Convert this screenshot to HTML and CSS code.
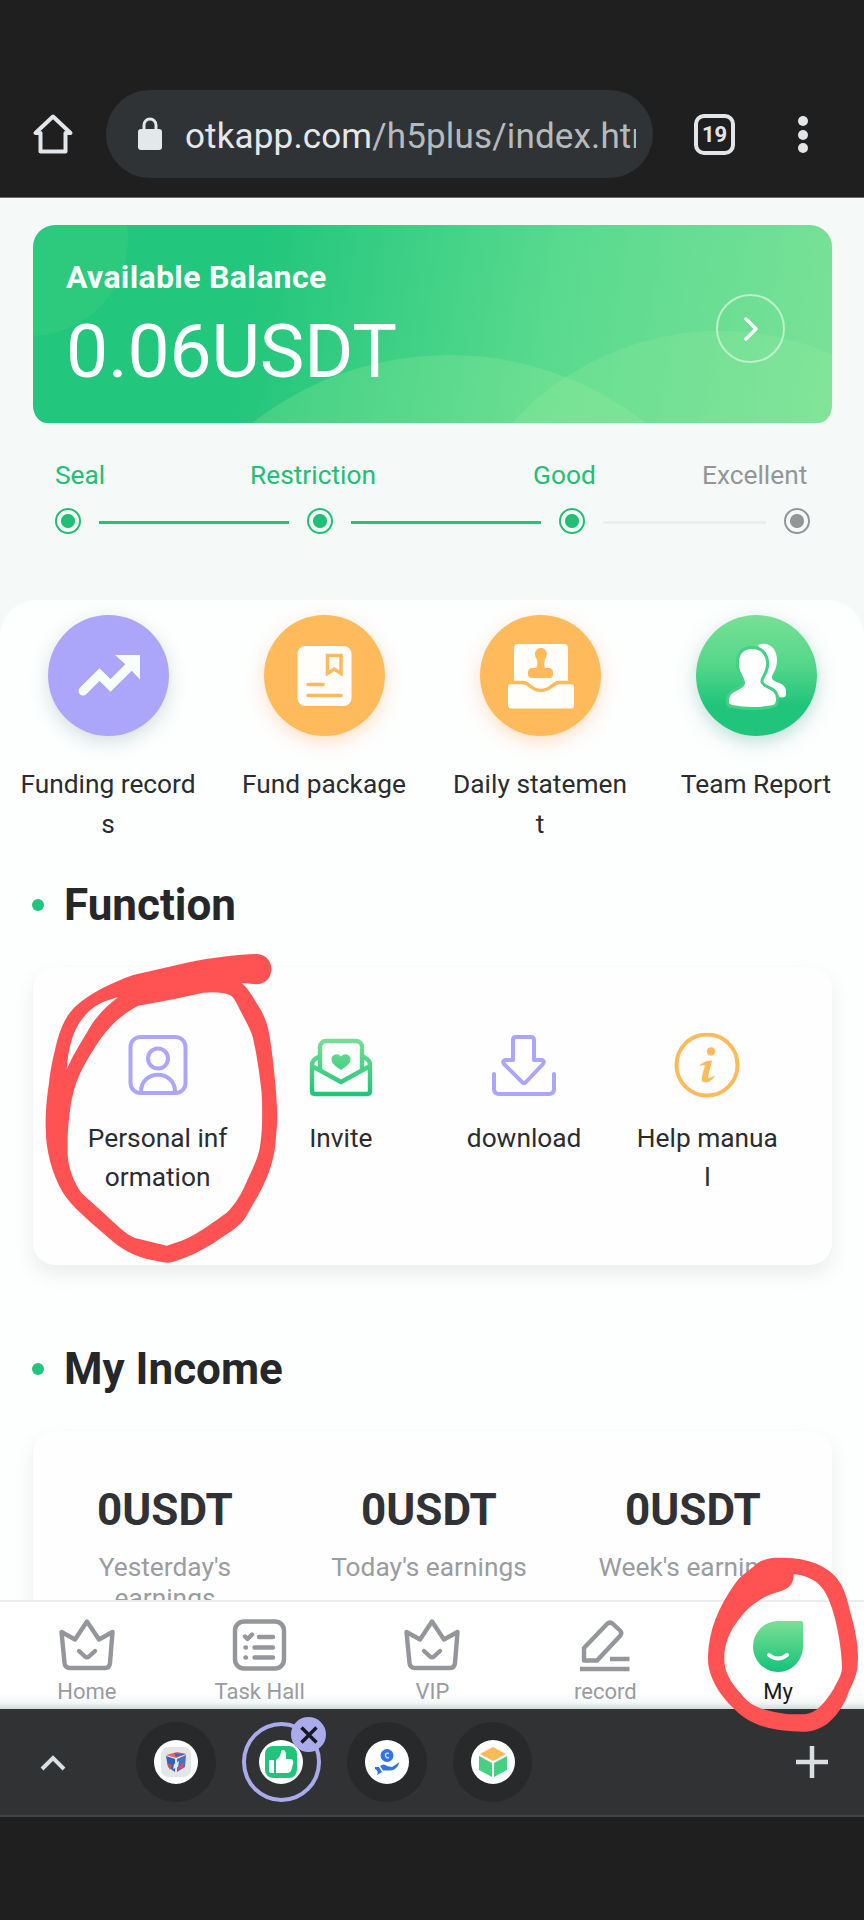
FILE: index.html
```html
<!DOCTYPE html>
<html lang="en">
<head>
<meta charset="utf-8">
<title>My account</title>
<link rel="stylesheet" href="styles.css">
</head>
<body>
<div class="phone">
  <header class="browser-bar">
    <svg class="home-icon" width="42" height="42" viewBox="0 0 42 42"><path d="M21 3.500 3.500 20H8.500V38.500H33.500V20H38.500Z" fill="none" stroke="#e3e6e8" stroke-width="4" stroke-linejoin="round"/></svg>
    <div class="url-pill">
      <svg class="lock" width="26" height="34" viewBox="0 0 26 34"><rect x="1" y="12" width="24" height="21" rx="3" fill="#e3e8ea"/><path d="M7 13V8a6 6 0 0 1 12 0v5" fill="none" stroke="#e3e8ea" stroke-width="3"/></svg>
      <div class="url">otkapp.com<span class="path">/h5plus/index.html</span></div>
    </div>
    <div class="tab-count">19</div>
    <div class="kebab"><i></i><i></i><i></i></div>
  </header>

  <main class="page">
    <section class="balance-wrap">
      <div class="balance">
        <svg class="bubbles" width="799" height="198" viewBox="33 225 799 198"><g fill="#a4f0a0"><circle cx="30" cy="238" r="98" opacity=".09"/><circle cx="449" cy="674" r="319" opacity=".24"/><circle cx="720" cy="612" r="281" opacity=".2"/></g></svg>
        <div class="balance-text">
          <div class="balance-label">Available Balance</div>
          <div class="balance-value">0.06USDT</div>
        </div>
        <div class="go"><svg width="14" height="24" viewBox="0 0 14 24"><path d="M2 2 12 12 2 22" fill="none" stroke="#fff" stroke-width="3.400" stroke-linecap="round" stroke-linejoin="round"/></svg></div>
      </div>
    </section>

    <section class="steps">
      <div class="step wide"><span class="name">Seal</span><div class="track"><b class="dot"></b><i class="line"></i></div></div>
      <div class="step wide"><span class="name mid">Restriction</span><div class="track"><b class="dot"></b><i class="line"></i></div></div>
      <div class="step third"><span class="name good">Good</span><div class="track"><b class="dot"></b><i class="line pale"></i></div></div>
      <div class="step last"><span class="name excellent">Excellent</span><div class="track"><b class="dot"></b></div></div>
    </section>

    <div class="sheet">
      <nav class="shortcuts">
        <div class="shortcut"><div class="disc violet">
          <svg width="121" height="121" viewBox="0 0 121 121"><path d="M35 76 51.500 59.500 62.500 70.500 83 50" fill="none" stroke="#f8fffb" stroke-width="9" stroke-linecap="round" stroke-linejoin="miter"/><path d="M67 40H92V64.500L85 57 76 48Z" fill="#f8fffb"/></svg>
        </div><p>Funding record<br>s</p></div>
        <div class="shortcut"><div class="disc orange">
          <svg width="121" height="121" viewBox="0 0 121 121"><rect x="33.500" y="31" width="54" height="60" rx="8" fill="#fffefb"/><path d="M63.500 40.500H77V58.500L70.300 54 63.500 58.500Z" fill="none" stroke="#ffbb5b" stroke-width="3.500"/><path d="M44 69.500H59M44 80.500H77" stroke="#ffbb5b" stroke-width="3.500" stroke-linecap="round"/></svg>
        </div><p>Fund package</p></div>
        <div class="shortcut"><div class="disc orange">
          <svg width="121" height="121" viewBox="0 0 121 121"><rect x="34" y="29" width="54" height="50" rx="4" fill="#fffefb"/><path d="M28 72a3 3 0 0 1 3-3H42C47 69 49 76.500 61 76.500S75 69 80 69H91a3 3 0 0 1 3 3V90a3.500 3.500 0 0 1-3.500 3.500H31.500A3.500 3.500 0 0 1 28 90Z" fill="#fffefb"/><path d="M29 67.500H43C50 67.500 50 75.500 61 75.500S72 67.500 79 67.500H93" fill="none" stroke="#ffbb5b" stroke-width="3.500"/><path d="M55 40a6 6 0 1 1 11 2C64 45 64 50 65 53H70a4 4 0 0 1 3 3.500V59a4 4 0 0 1-4 4H52a4 4 0 0 1-4-4V56.500A4 4 0 0 1 51 53H56C58 50 58 45 55.500 42Z" fill="#ffbb5b"/></svg>
        </div><p>Daily statemen<br>t</p></div>
        <div class="shortcut"><div class="disc green">
          <svg width="121" height="121" viewBox="0 0 121 121"><path d="M62 30C72 26 81 33 81 45 81 56 75 60 76 63 77 68 90 67 90 76V79C90 83 86 83 83 82L66 70 70 50Z" fill="#fff"/><path d="M56 32.500C67 32.500 72.500 41 71.500 51 70.500 60 65 63 66 67 67 73 81.500 71 81.500 84 81.500 90 79 91.500 75 92 62 94 48 94 36 91.500 32 91 31 88 31.500 84 33 73 47 75 47.500 68 48 63 41 58 41.500 49 41 39 46 32.500 56 32.500Z" fill="#fff" stroke="#46cf86" stroke-width="3"/></svg>
        </div><p>Team Report</p></div>
      </nav>

      <h2 class="heading">Function</h2>
      <section class="card functions">
        <div class="fn"><div class="fn-icon"><svg width="66" height="66" viewBox="0 0 66 66" fill="none" stroke="#aba6f9" stroke-width="4"><rect x="5.500" y="4" width="55" height="56" rx="10"/><circle cx="33" cy="25.500" r="10"/><path d="M16 59C16 36 50 36 50 59"/></svg></div><p>Personal inf<br>ormation</p></div>
        <div class="fn"><div class="fn-icon"><svg width="66" height="66" viewBox="0 0 66 66"><defs><linearGradient id="env" x1="0" y1="6" x2="0" y2="62" gradientUnits="userSpaceOnUse"><stop stop-color="#76df95"/><stop offset="1" stop-color="#22c47b"/></linearGradient></defs><g fill="none" stroke="url(#env)" stroke-width="4.400" stroke-linejoin="round"><path d="M12 36V14A6 6 0 0 1 18 8H48A6 6 0 0 1 54 14V36"/><path d="M11.500 23.500 7 26Q4 28 4 32V58Q4 61 7 61H59Q62 61 62 58V32Q62 28 59 26L54.500 23.500M4 33 33 49 62 33"/></g><path d="M33 37C29 34 23 31 23.500 25.500 24 21 30 19.500 33 23.500 36 19.500 42 21 42.500 25.500 43 31 37 34 33 37Z" fill="url(#env)"/></svg></div><p>Invite</p></div>
        <div class="fn"><div class="fn-icon"><svg width="66" height="66" viewBox="0 0 66 66" fill="none" stroke="#aba6f9" stroke-width="4" stroke-linejoin="round" stroke-linecap="round"><path d="M22 27V7Q22 4 25 4H40Q43 4 43 7V27H51Q54 28 52 31L35 49Q33 51 31 49L13 31Q11 28 14 27Z"/><path d="M3 41V56Q3 61 8 61H58Q63 61 63 56V41"/></svg></div><p>download</p></div>
        <div class="fn"><div class="fn-icon"><svg width="66" height="66" viewBox="0 0 66 66"><circle cx="33" cy="32" r="30.500" fill="none" stroke="#ffbb5b" stroke-width="4"/><circle cx="37" cy="18.500" r="4.200" fill="#ffbb5b"/><path d="M24 33C28 31 30 27.500 38 27.500L34 44C34 46 36 44 41 43 38 48 33 50.500 29 49 26 48 29 40 31 32.500 28 32 26 32.500 24 33Z" fill="#ffbb5b"/></svg></div><p>Help manua<br>l</p></div>
      </section>

      <h2 class="heading income-heading">My Income</h2>
      <section class="card income">
        <div class="earn"><strong>0USDT</strong><span>Yesterday's<br>earnings</span></div>
        <div class="earn"><strong>0USDT</strong><span>Today's earnings</span></div>
        <div class="earn"><strong>0USDT</strong><span>Week's earnings</span></div>
      </section>
    </div>
  </main>

  <nav class="tabs">
    <div class="tab"><svg width="56" height="56" viewBox="0 0 56 56" fill="none" stroke="#95969b" stroke-width="4.400" stroke-linejoin="round" stroke-linecap="round"><path d="M2.500 15 16 22.500 28 4.500 40 22.500 53.500 15 51 46Q50.500 51 46 51H11Q6 51 5.500 46Z"/><path d="M20 34 26 39.500Q28 41 30 39.500L36 34"/></svg><span>Home</span></div>
    <div class="tab"><svg width="56" height="56" viewBox="0 0 56 56" fill="none" stroke="#95969b" stroke-width="4.400" stroke-linejoin="round" stroke-linecap="round"><rect x="3" y="4.500" width="49" height="47" rx="9"/><path d="M13 19.500 15.500 22 20 17.500M27 20H41M22.500 30.500H41M22.500 40.500H41M13.500 30.500h.5M13.500 40.500h.5"/></svg><span>Task Hall</span></div>
    <div class="tab"><svg width="56" height="56" viewBox="0 0 56 56" fill="none" stroke="#95969b" stroke-width="4.400" stroke-linejoin="round" stroke-linecap="round"><path d="M2.500 15 16 22.500 28 4.500 40 22.500 53.500 15 51 46Q50.500 51 46 51H11Q6 51 5.500 46Z"/><path d="M20 34 26 39.500Q28 41 30 39.500L36 34"/></svg><span>VIP</span></div>
    <div class="tab"><svg width="56" height="56" viewBox="0 0 56 56" fill="none" stroke="#95969b" stroke-width="4.400" stroke-linejoin="round"><path d="M7 43.500V31L29.500 7.500Q32.500 4 36 7L43 13.500Q45.500 16 43 19L20 43.500Z"/><path d="M33 42H52.500M3 52H52.500"/></svg><span>record</span></div>
    <div class="tab active"><svg width="56" height="56" viewBox="0 0 56 56"><defs><linearGradient id="face" x1="0" y1="0" x2="0" y2="1"><stop stop-color="#7be095"/><stop offset="1" stop-color="#14c279"/></linearGradient></defs><path d="M28 4H51Q53 4 53 6V29A25 25.500 0 1 1 28 4Z" fill="url(#face)"/><path d="M19 38Q28 45 37 38" fill="none" stroke="#fff" stroke-width="4" stroke-linecap="round"/></svg><span>My</span></div>
  </nav>

  <footer class="dock">
    <svg class="up" width="26" height="17" viewBox="0 0 26 17"><path d="M2 15 13 4 24 15" fill="none" stroke="#dcdfe1" stroke-width="4"/></svg>
    <div class="sites">
      <div class="site"><div class="fav"><svg width="44" height="44" viewBox="0 0 44 44"><rect x="7" y="7" width="30" height="30" rx="7" fill="#e2e7e5"/><path d="M12 15 23 12 32 14 22 18Z" fill="#ef6464"/><path d="M20 13 32 14 22 17Z" fill="#3e69c2"/><path d="M12 16 21 19V32L14 27Z" fill="#315fc2"/><path d="M23 19 32 15 31 27 23 32Z" fill="#4472c5"/><path d="M13 23 18 25 16 30ZM25 26 30 22 29 28 24 30Z" fill="#e34854"/><path d="M20 24 25 21 24 27 19 29Z" fill="#dce7ee"/></svg></div></div>
      <div class="site current"><div class="fav"><svg width="44" height="44" viewBox="0 0 44 44"><rect x="6" y="6" width="32" height="32" rx="8" fill="#22c47b"/><path d="M10 20H15V33H12Q10 33 10 30ZM17 20Q22 17 22 11 26 8 27 14V19H32Q35 20 34 24L32 31Q31 33 28 33H17Z" fill="#fff"/></svg></div>
        <div class="close"><svg width="18" height="18" viewBox="0 0 18 18"><path d="M1.500 1.500 16.500 16.500M16.500 1.500 1.500 16.500" stroke="#151822" stroke-width="3.400"/></svg></div>
      </div>
      <div class="site"><div class="fav"><svg width="44" height="44" viewBox="0 0 44 44"><circle cx="22" cy="15.500" r="6.500" fill="#3274e0"/><path d="M24 13.500Q20 12.500 20.500 15.500T24 17.500" fill="none" stroke="#c3d9fb" stroke-width="1.500"/><path d="M10 27 14 27 17 32 12 35Q14 31 10 29ZM15 26Q19 23 22 26L27 27 34.500 22Q32 30 26 30.500H18Z" fill="#3274e0"/></svg></div></div>
      <div class="site"><div class="fav"><svg width="44" height="44" viewBox="0 0 44 44"><path d="M22 7 35 14 22 21 9 14Z" fill="#ffb957"/><path d="M8 16 21 23V37L8 30Z" fill="#46d083"/><path d="M23 23 36 16V30L23 37Z" fill="#46d083"/></svg></div></div>
    </div>
    <svg class="plus" width="32" height="32" viewBox="0 0 32 32"><path d="M16 0V32M0 16H32" stroke="#dcdfe1" stroke-width="4.500"/></svg>
  </footer>

  <svg class="markup" width="864" height="1920" viewBox="0 0 864 1920" fill="#ff5252" fill-rule="evenodd">
    <path transform="translate(0 860) scale(.33333)" d="M770 282C720 282 640 292 560 308L400 345C340 365 270 400 225 440 185 480 172 540 165 570 155 610 150 640 147 670 139 720 137 760 137 800 137 870 155 940 190 1000 215 1040 270 1085 310 1120 350 1156 380 1180 440 1197L490 1207Q505 1210 520 1205C560 1194 600 1175 640 1150 680 1122 720 1100 735 1075L775 1005C810 940 825 890 828 830 835 770 830 730 827 680 822 630 818 590 812 550 805 490 790 460 770 430Q745 385 725 369L768 373C828 373 830 285 770 282ZM415 437 520 418 610 398Q660 393 690 405C705 415 710 430 725 460Q750 505 758 530C770 580 780 650 785 700 788 760 787 820 780 860 773 900 755 930 740 965 725 1000 705 1035 680 1058 650 1080 590 1125 545 1142L500 1157 405 1134C375 1120 350 1095 320 1067L245 1000C220 965 203 920 203 880V830C205 780 212 730 217 710 230 650 260 600 280 570 310 520 350 470 415 437ZM354 412C300 425 270 445 248 475 220 510 205 560 200 630 215 590 245 545 265 510 290 465 325 435 354 412Z"/>
    <path transform="translate(432 1540) scale(.33333)" d="M1060 53C1140 55 1200 85 1225 130 1245 165 1250 200 1260 235 1275 290 1280 340 1277 370 1277 410 1255 440 1245 470 1220 525 1180 575 1115 575 1030 575 960 560 910 510 855 460 825 400 828 350 830 270 860 200 910 130 930 100 950 95 970 75 1000 50 1030 53 1060 53ZM1085 103C1165 110 1185 160 1200 205 1215 250 1230 330 1230 385 1228 410 1215 425 1205 447 1180 485 1155 523 1110 523H1070C1010 515 960 505 930 465 890 420 875 390 877 350 878 290 915 240 950 205 1000 160 1035 160 1055 150 1080 140 1085 122 1085 103Z"/>
  </svg>
</div>
</body>
</html>
```
FILE: styles.css
```css
* { box-sizing: border-box; }
body { margin: 0; background: #1f1f1f; font-family: Roboto, sans-serif; color: #2a2c2f; }
p, h2 { margin: 0; font-weight: 400; }
svg { display: block; flex: none; }

.phone { position: relative; width: 864px; height: 1920px; overflow: hidden; display: flex; flex-direction: column; background: #1f1f1f; }

/* browser chrome */
.browser-bar { flex: none; height: 198px; padding: 90px 53px 0 32px; display: flex; align-items: flex-start; border-bottom: 1px solid #6c6e6e; }
.home-icon { margin-top: 23px; }
.url-pill { width: 547px; height: 88px; margin-left: 32px; border-radius: 44px; background: #303335; display: flex; align-items: center; padding: 0 17px 0 31px; }
.lock { margin-top: -1px; }
.url { margin: 5px 0 0 22px; flex: 1; overflow: hidden; white-space: nowrap; font-size: 35px; line-height: 44px; letter-spacing: .15px; color: #e5e8ea; }
.path { color: #b6babd; }
.tab-count { width: 41px; height: 41px; margin: 24px 0 0 41px; border: 4px solid #e3e6e8; border-radius: 10px; color: #e3e6e8; font-size: 22px; line-height: 33px; font-weight: 700; text-align: center; }
.kebab { margin: 26px 0 0 63px; display: flex; flex-direction: column; gap: 3.500px; }
.kebab i { width: 10px; height: 10px; border-radius: 50%; background: #e3e6e8; }

/* page */
.page { flex: none; height: 1402px; overflow: hidden; background: #f5f9f8; }
.balance-wrap { padding: 27px 32px 0 33px; }
.balance { position: relative; height: 198px; overflow: hidden; border-radius: 22px 22px 14px 14px / 22px 22px 18px 18px; background: linear-gradient(100deg, #22c67c 28%, #5ada8f 65%, #78e197 98%); display: flex; justify-content: space-between; padding: 0 47px 0 33px; }
.bubbles { position: absolute; inset: 0; }
.balance-text { position: relative; color: #fff; padding-top: 33px; }
.balance-label { font-size: 32px; line-height: 38px; font-weight: 700; letter-spacing: .35px; }
.balance-value { margin-top: 11px; font-size: 75px; line-height: 88px; letter-spacing: -.2px; }
.go { position: relative; width: 69px; height: 69px; margin-top: 69px; border: 2px solid #bdf0cb; border-radius: 50%; display: flex; align-items: center; justify-content: center; }

.steps { height: 177px; padding: 36px 54px 0 55px; display: flex; }
.step { color: #22bf76; font-size: 26.300px; line-height: 32px; }
.wide { width: 252px; }
.third { width: 225px; }
.name { display: block; width: max-content; }
.mid { margin-left: -57px; }
.good { margin-left: -26px; }
.excellent { margin-left: -82px; }
.track { display: flex; align-items: center; margin-top: 17px; }
.dot { flex: none; width: 26px; height: 26px; border: 2px solid currentColor; border-radius: 50%; background: radial-gradient(circle, currentColor 6.500px, transparent 7.500px); }
.line { flex: 1; height: 3px; margin: 2px 18px 0 18px; background: #22c47b; }
.pale { background: #eceeee; }
.last { width: 26px; color: #939699; }

.sheet { background: #fdfefe; height: 1000px; border-radius: 36px 36px 0 0; }
.shortcuts { display: flex; height: 260px; padding-top: 15px; }
.shortcut { width: 216px; text-align: center; font-size: 26.300px; line-height: 40px; display: flex; flex-direction: column; align-items: center; gap: 28px; }
.shortcut p { white-space: nowrap; }
.disc { width: 121px; height: 121px; border-radius: 50%; flex: none; }
.violet { background: #aba6f9; box-shadow: 0 6px 18px #c3d0d2b0; }
.orange { background: #ffbb5b; box-shadow: 0 6px 18px #ffd4b0b0; }
.green { background: linear-gradient(#77e095, #56d78b 40%, #20c47a 75%); box-shadow: 0 6px 18px #a4d2c6b0; }

.heading { display: flex; align-items: center; height: 90px; padding-left: 32px; font-size: 44px; font-weight: 700; line-height: 52px; color: #252729; }
.heading::before { content: ""; width: 12px; height: 12px; border-radius: 50%; background: #22c47b; margin-right: 20px; }
.card { margin: 17px 32px 0 33px; border-radius: 22px; background: #fefefe; box-shadow: 0 9px 18px #dfe5e399; }
.functions { height: 298px; padding: 66px 33px 0; display: flex; }
.fn { width: 183.300px; display: flex; flex-direction: column; align-items: center; text-align: center; font-size: 26.300px; line-height: 39px; gap: 20px; }
.fn p { white-space: nowrap; }
.fn-icon { height: 66px; }
.income-heading { margin-top: 59px; }
.income { height: 260px; padding-top: 53px; display: flex; }
.earn { width: 264px; text-align: center; }
.earn strong { display: block; font-size: 44px; line-height: 52px; color: #303235; }
.earn span { display: block; margin-top: 16px; font-size: 26.300px; line-height: 31px; color: #999ca0; }

.tabs { flex: none; height: 109px; border-top: 2px solid #eceeee; display: flex; background: linear-gradient(#fff 85%, #f5f7f7 94%, #d2dada); }
.tab { flex: 1; padding: 15px 0 0 1px; display: flex; flex-direction: column; align-items: center; font-size: 22px; line-height: 26px; color: #999b9f; gap: 6px; }
.active { color: #17191b; }

/* tab group dock */
.dock { flex: none; height: 108px; background: #303234; border-bottom: 2px solid #414446; display: flex; align-items: center; padding: 0 36px 0 40px; }
.up { margin-right: 70px; }
.sites { display: flex; gap: 26px; }
.site { position: relative; width: 79.600px; height: 80px; border-radius: 50%; background: #28292b; display: flex; align-items: center; justify-content: center; }
.current { border: 4px solid #a9abea; background: #303234; }
.fav { width: 44px; height: 44px; border-radius: 50%; background: #fff; }
.close { position: absolute; right: -9px; top: -9px; width: 35px; height: 35px; border-radius: 50%; background: #a9abea; display: flex; align-items: center; justify-content: center; }
.plus { margin-left: auto; }

.markup { position: absolute; left: 0; top: 0; pointer-events: none; }
```
